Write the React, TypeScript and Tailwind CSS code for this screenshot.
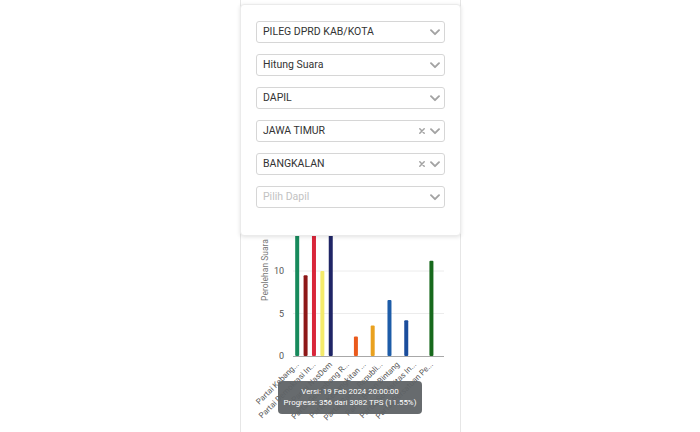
import React from "react";

type Opt = { label: string; placeholder?: boolean; clear?: boolean };

const selects: Opt[] = [
  { label: "PILEG DPRD KAB/KOTA" },
  { label: "Hitung Suara" },
  { label: "DAPIL" },
  { label: "JAWA TIMUR", clear: true },
  { label: "BANGKALAN", clear: true },
  { label: "Pilih Dapil", placeholder: true },
];

const bars: { v: number; c: string }[] = [
  { v: 22, c: "#178a5c" },
  { v: 9.5, c: "#8e1717" },
  { v: 22, c: "#d9263a" },
  { v: 10, c: "#f4ea6a" },
  { v: 22, c: "#1f2566" },
  { v: 0, c: "#000" },
  { v: 0, c: "#000" },
  { v: 2.3, c: "#ea5a1c" },
  { v: 0, c: "#000" },
  { v: 3.6, c: "#e9a11f" },
  { v: 0, c: "#000" },
  { v: 6.6, c: "#1d5ca8" },
  { v: 0, c: "#000" },
  { v: 4.2, c: "#1b4d9c" },
  { v: 0, c: "#000" },
  { v: 0, c: "#000" },
  { v: 11.2, c: "#17691c" },
  { v: 0, c: "#000" },
];

const labels: Record<number, string> = {
  0: "Partai Kebang...",
  2: "Partai Demokrasi In...",
  4: "Partai NasDem",
  6: "Partai Gelombang R...",
  8: "Partai Kebangkitan ...",
  10: "Partai Garda Republi...",
  12: "Partai Bulan Bintang",
  14: "Partai Solidaritas In...",
  16: "Partai Persatuan Pe...",
};

function Chevron() {
  return (
    <svg width="10" height="7" viewBox="0 0 10 7" className="shrink-0">
      <path d="M1 1.2 L5 5.2 L9 1.2" fill="none" stroke="#a3a3a3" strokeWidth="1.9" strokeLinecap="round" strokeLinejoin="round" />
    </svg>
  );
}

function Cross() {
  return (
    <svg width="6" height="6" viewBox="0 0 6 6" className="shrink-0">
      <path d="M0.8 0.8 L5.2 5.2 M5.2 0.8 L0.8 5.2" fill="none" stroke="#a3a3a3" strokeWidth="1.5" strokeLinecap="round" />
    </svg>
  );
}

function Chart() {
  const x0 = 52;
  const x1 = 203;
  const step = (x1 - x0) / 18;
  const base = 356;
  const u = 8.5;
  return (
    <svg width="221" height="432" viewBox="0 0 221 432" className="block font-['Roboto',sans-serif]">
      <line x1={x0} x2={x1} y1={base - 10 * u} y2={base - 10 * u} stroke="#ececec" strokeWidth="1" />
      <line x1={x0} x2={x1} y1={base - 5 * u} y2={base - 5 * u} stroke="#ececec" strokeWidth="1" />
      <line x1={x0} x2={x1} y1={base - 15 * u} y2={base - 15 * u} stroke="#ececec" strokeWidth="1" />
      {bars.map((b, i) =>
        b.v > 0 ? (
          <rect
            key={i}
            x={x0 + step * (i + 0.5) - 2}
            y={base - b.v * u}
            width="4"
            height={b.v * u}
            rx="1"
            fill={b.c}
          />
        ) : null
      )}
      <line x1={x0} x2={x1} y1={base + 0.5} y2={base + 0.5} stroke="#a8a8a8" strokeWidth="1" />
      <text x="43" y={base + 3} textAnchor="end" fontSize="9" fill="#555">0</text>
      <text x="43" y={base - 5 * u + 3} textAnchor="end" fontSize="9" fill="#555">5</text>
      <text x="43" y={base - 10 * u + 3} textAnchor="end" fontSize="9" fill="#555">10</text>
      <text x="27" y="270" textAnchor="middle" fontSize="8.5" fill="#777" transform="rotate(-90 27 270)">Perolehan Suara</text>
      {Object.entries(labels).map(([k, t]) => {
        const i = Number(k);
        const cx = x0 + step * (i + 0.5) + 2;
        const cy = base + 9;
        return (
          <text key={k} x={cx} y={cy} textAnchor="end" fontSize="8" fill="#555" transform={`rotate(-45 ${cx} ${cy})`}>
            {t}
          </text>
        );
      })}
    </svg>
  );
}

export default function App() {
  return (
    <div className="relative w-[700px] h-[432px] overflow-hidden bg-white font-['Roboto',sans-serif]">
      <div className="ml-[240px] w-[221px] h-[432px] border-x border-[#e6e6e6]">
        <Chart />
      </div>

      <div className="absolute left-[240px] top-[4px] w-[221px] h-[232px] bg-white rounded-[4px] border border-[#ebebeb] shadow-[0_1px_4px_rgba(0,0,0,0.12)] pt-[16px] px-[15px] flex flex-col gap-[11px]">
        {selects.map((s, i) => (
          <div key={i} className="h-[22px] flex items-center bg-white border border-[#d6d6d6] rounded-[3px] pl-[6px] pr-[4px]">
            <span className={s.placeholder ? "flex-1 text-[10.5px] leading-none text-[#c2c2c2]" : "flex-1 text-[10.5px] leading-none text-[#333333]"}>{s.label}</span>
            {s.clear && (
              <span className="mr-[5px] flex items-center">
                <Cross />
              </span>
            )}
            <Chevron />
          </div>
        ))}
      </div>

      <div className="absolute left-[278px] top-[381px] w-[144px] h-[33px] rounded-[4px] bg-[#5f6366]/95 flex flex-col items-center justify-center text-white text-[7.9px] leading-[10.6px]">
        <span>Versi: 19 Feb 2024 20:00:00</span>
        <span>Progress: 356 dari 3082 TPS (11.55%)</span>
      </div>
    </div>
  );
}
